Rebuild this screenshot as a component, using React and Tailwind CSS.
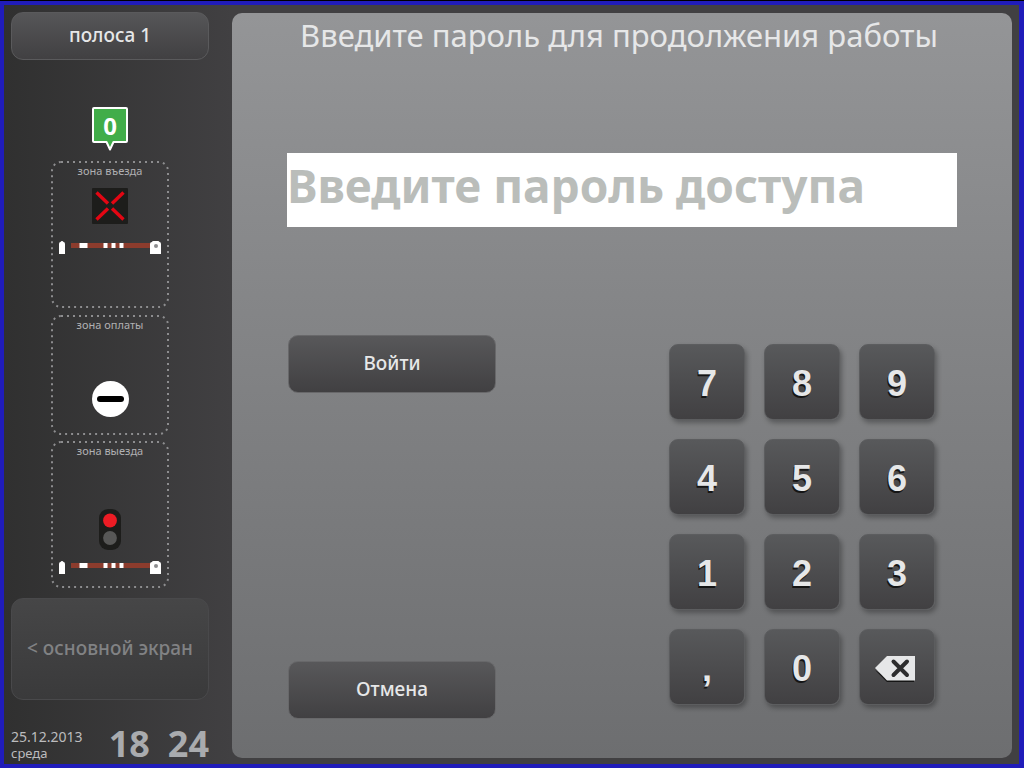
import { useState } from "react";

const KEYS = ["7", "8", "9", "4", "5", "6", "1", "2", "3", ",", "0"];

function ZoneFrame({ height }) {
  return (
    <svg
      className="absolute inset-0"
      width="118"
      height={height}
      fill="none"
      stroke="#8d8d8f"
      strokeWidth="2"
      aria-hidden="true"
    >
      <rect x="1" y="1" width="116" height={height - 2} rx="9" strokeDasharray="2 4" />
    </svg>
  );
}

function Barrier() {
  return (
    <svg width="102" height="13" viewBox="0 0 102 13" aria-hidden="true">
      <path d="M0 13V3Q0 1 1.500 1Q2 0 3 0Q4 0 4.500 1Q6 1 6 3V13Z" fill="#fff" />
      <rect x="12" y="2" width="80" height="5" fill="#8c3c2d" />
      <path d="M20.500 2h8v5h-8zM44.500 2h4v5h-4zM52.500 2h4v5h-4zM60.500 2h4v5h-4z" fill="#fff" />
      <path d="M91 13V3Q91 1 93 1Q93 0 94.500 0H99Q100 0 100.500 1Q102 1 102 3V13Z" fill="#fff" />
      <circle cx="97" cy="5" r="2" fill="#8d8d8f" />
    </svg>
  );
}

function CounterBadge({ value }) {
  return (
    <div className="relative h-11 w-9">
      <svg className="absolute inset-0" width="36" height="44" viewBox="0 0 36 44" aria-hidden="true">
        <path
          d="M2 1H34Q35 1 35 2V34Q35 35 34 35H21.500L18 42.500L14.500 35H2Q1 35 1 34V2Q1 1 2 1Z"
          fill="#41ad49"
          stroke="#fff"
          strokeWidth="2"
          strokeLinejoin="round"
        />
      </svg>
      <span className="relative block text-center text-2xl leading-[38px] font-bold text-white">{value}</span>
    </div>
  );
}

function ClosedSign() {
  return (
    <svg width="36" height="36" viewBox="0 0 36 36" aria-hidden="true">
      <rect width="36" height="36" rx="1" fill="#1d1d1b" />
      <path d="M4.500 4.500L16 15.500M31.500 4.500L20 15.500M4.500 31.500L16 20.500M31.500 31.500L20 20.500" stroke="#e30613" strokeWidth="3.400" />
    </svg>
  );
}

function TrafficLight() {
  return (
    <svg width="22" height="41" viewBox="0 0 22 41" aria-hidden="true">
      <rect width="22" height="41" rx="9" fill="#1d1d1b" />
      <circle cx="11" cy="11.500" r="6.900" fill="#ed1c24" />
      <circle cx="11" cy="29" r="6.900" fill="#575756" />
    </svg>
  );
}

function Zone({ title, height, className, children }) {
  return (
    <section className={`relative flex w-[118px] flex-col items-center ${className}`}>
      <ZoneFrame height={height} />
      <h2 className="pt-0.5 text-[11px] leading-4 text-[#b0b0b2]">{title}</h2>
      {children}
    </section>
  );
}

function BackspaceIcon() {
  return (
    <svg width="44" height="27" viewBox="0 0 44 27" aria-hidden="true">
      <path d="M0 14L12 26H39V24L12 22Z" fill="#151515" />
      <path d="M0 12L12 0H40V24.500H12Z" fill="#e6e7e8" />
      <path d="M18.500 5.500L32 19M32 5.500L18.500 19" stroke="#2d2d2e" strokeWidth="4" strokeLinecap="round" />
    </svg>
  );
}

const actionClass =
  "h-[58px] w-[208px] rounded-[10px] border border-[#68686a] bg-linear-to-b from-[#58585a] to-[#414042] pb-0.5 text-[19px] font-medium text-[#e6e7e8]";
const keyClass =
  "flex size-[76px] items-center justify-center rounded-[9px] border border-[#5c5d5f] bg-linear-to-b from-[#58595b] to-[#414042] pt-1 font-['Liberation_Sans',Arial,sans-serif] text-4xl font-bold text-[#e6e7e8] shadow-[2px_3px_5px_rgba(0,0,0,0.3)] [text-shadow:-1px_2px_0_#151515]";

export default function App() {
  const [password, setPassword] = useState("");

  return (
    <div className="flex min-h-screen border-t border-black bg-[#201cba] pt-1 pr-[5px] pb-1 pl-1 font-['Noto_Sans',sans-serif]">
      <div className="flex flex-1 bg-[#414042]">
        <aside className="flex w-[228px] shrink-0 flex-col bg-linear-to-r from-[#303030] to-[#414042] pt-[7px] pr-[23px] pb-[3px] pl-[7px]">
          <button
            type="button"
            className="h-12 rounded-xl border border-[#5a5a5c] bg-linear-to-b from-[#565658] to-[#414042] pb-0.5 text-[19px] font-medium text-[#e6e7e8]"
          >
            полоса 1
          </button>

          <div className="mt-[47px] flex flex-col items-center">
            <CounterBadge value="0" />
            <Zone title="зона въезда" height={147} className="mt-2.5 h-[147px]">
              <div className="mt-[9px]">
                <ClosedSign />
              </div>
              <div className="mt-[17px]">
                <Barrier />
              </div>
            </Zone>
            <Zone title="зона оплаты" height={120} className="mt-[7px] h-[120px]">
              <svg className="mt-12" width="38" height="37" viewBox="0 0 38 37" aria-hidden="true">
                <ellipse cx="19.500" cy="18" rx="18.500" ry="18" fill="#fff" />
                <rect x="6" y="15" width="27" height="6" rx="3" fill="#000" />
              </svg>
            </Zone>
            <Zone title="зона выезда" height={147} className="mt-1.5 h-[147px]">
              <div className="mt-[50px]">
                <TrafficLight />
              </div>
              <div className="mt-[11px]">
                <Barrier />
              </div>
            </Zone>
          </div>

          <button
            type="button"
            disabled
            className="mt-2.5 h-[102px] rounded-xl border border-[#49494b] bg-linear-to-b from-[#464647] to-[#3a3a3b] pb-0.5 text-[19px] font-medium text-[#818284]"
          >
            &lt; основной экран
          </button>

          <footer className="mt-auto flex items-end justify-between text-[#bcbcbe]">
            <div>
              <p className="text-sm leading-4">25.12.2013</p>
              <p className="text-[13px] leading-4">среда</p>
            </div>
            <p className="flex gap-[18px] text-4xl leading-[34px] font-bold text-[#a9abae]">
              <span>18</span>
              <span>24</span>
            </p>
          </footer>
        </aside>

        <main className="mt-2 mr-[7px] mb-1.5 flex flex-1 flex-col rounded-[10px] bg-linear-to-b from-[#949597] to-[#6d6e70] px-[55px] pb-[39px]">
          <h1 className="pr-1.5 text-center text-[31px] leading-[44px] whitespace-nowrap text-[#e6e7e8]">
            Введите пароль для продолжения работы
          </h1>
          <form className="flex flex-1 flex-col" onSubmit={(e) => e.preventDefault()}>
            <input
              type="password"
              aria-label="Пароль доступа"
              placeholder="Введите пароль доступа"
              value={password}
              onChange={(e) => setPassword(e.target.value)}
              className="mt-24 h-[74px] w-full bg-white pb-2.5 text-[46px] font-bold text-[#414042] outline-none placeholder:text-[#babdba]"
            />
            <div className="mt-auto flex justify-between pr-[22px] pl-px">
              <div className="flex flex-col justify-between">
                <button type="submit" className={actionClass}>
                  Войти
                </button>
                <button type="button" className={actionClass} onClick={() => setPassword("")}>
                  Отмена
                </button>
              </div>
              <div className="grid grid-cols-3 gap-[19px] pt-[9px] pb-3.5">
                {KEYS.map((key) => (
                  <button key={key} type="button" className={keyClass} onClick={() => setPassword(password + key)}>
                    {key}
                  </button>
                ))}
                <button
                  type="button"
                  aria-label="Удалить"
                  className={keyClass}
                  onClick={() => setPassword(password.slice(0, -1))}
                >
                  <BackspaceIcon />
                </button>
              </div>
            </div>
          </form>
        </main>
      </div>
    </div>
  );
}
